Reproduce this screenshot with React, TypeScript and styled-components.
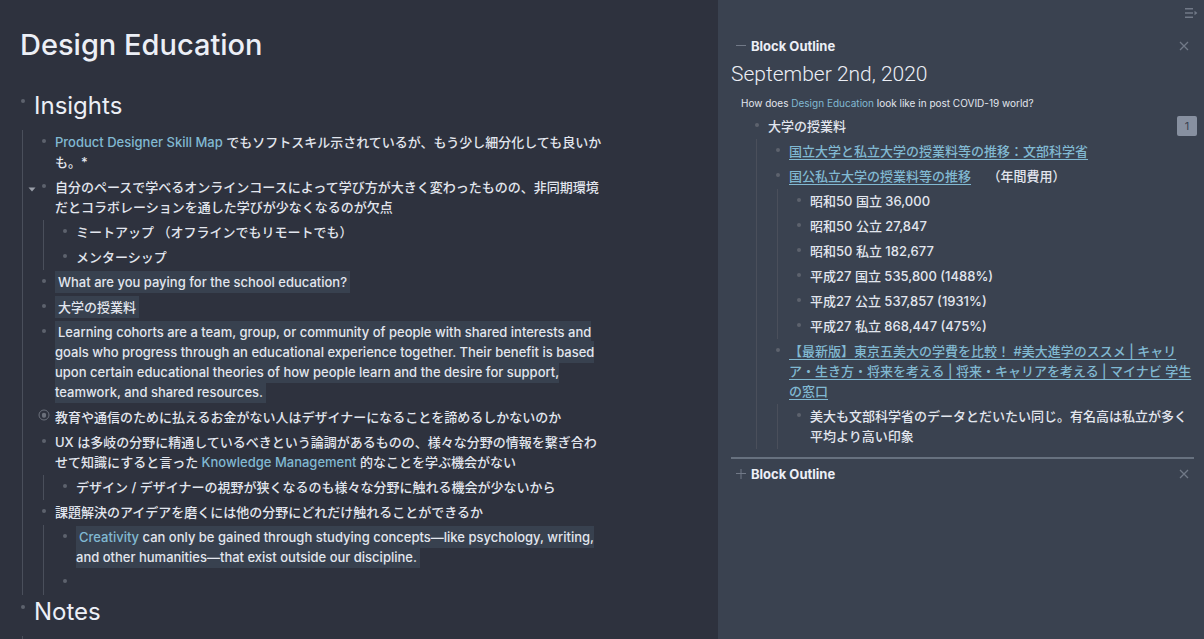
import React from "react";
import styled, { createGlobalStyle } from "styled-components";

const color = {
  page: "#2e323e",
  side: "#3a4250",
  text: "#e2e6ee",
  heading: "#eceff6",
  link: "#81b9d2",
  mark: "#38414f",
  line: "#4a4f5b",
  dot: "#5d626d",
  muted: "#717987",
};

const GlobalStyle = createGlobalStyle`
  * { box-sizing: border-box; }
  body {
    margin: 0;
    background: ${color.page};
    color: ${color.text};
    font-family: Inter, "Noto Sans CJK JP", sans-serif;
    font-size: 13px;
    line-height: 20px;
    font-weight: 500;
  }
`;

const Layout = styled.div`
  display: grid;
  grid-template-columns: minmax(0, 718fr) minmax(0, 486fr);
  height: 100vh;
`;

const Article = styled.main`
  padding: 27px 115px 0 21px;
  overflow-y: auto;
  scrollbar-width: none;
`;

const Sidebar = styled.aside`
  padding: 6px 10px 0 13px;
  background: ${color.side};
  overflow-y: auto;
  scrollbar-width: none;
`;

const PageTitle = styled.h1`
  margin: 0 0 26px -1px;
  color: ${color.heading};
  font-size: 29px;
  line-height: 36px;
  font-weight: 500;
`;

const SectionTitle = styled.h2`
  margin: 0;
  color: ${color.heading};
  font-size: 24px;
  line-height: 34px;
  font-weight: 400;
`;

const Blocks = styled.ul`
  list-style: none;
  margin: 0;
  padding: 0;
`;

const Children = styled(Blocks)<{ $gap?: number }>`
  margin: ${(p) => p.$gap ?? 0}px 0 0 1px;
  padding-left: 19px;
  border-left: 1px solid ${color.line};
`;

const Row = styled.div<{ $heading?: boolean }>`
  position: relative;
  display: flex;
  align-items: flex-start;
  min-height: 25px;
  padding: ${(p) => (p.$heading ? "0" : "2px 0 3px")};
`;

const Bullet = styled.span<{ $heading?: boolean }>`
  flex: 0 0 13px;
  height: 20px;
  padding-top: ${(p) => (p.$heading ? 10 : 7)}px;

  &::before {
    content: "";
    display: block;
    width: 4px;
    height: 4px;
    border-radius: 50%;
    background: ${color.dot};
  }
`;

const RingMark = styled.svg`
  position: absolute;
  left: -4px;
  top: 4px;
`;

const Caret = styled.button`
  position: absolute;
  left: -14px;
  top: 10px;
  width: 8px;
  height: 8px;
  padding: 0;
  border: 0;
  background: none;
  color: #9a9fa9;
  line-height: 0;
`;

const Text = styled.div`
  flex: 1;
  min-width: 0;
`;

const Mark = styled.span`
  padding: 3px;
  background: ${color.mark};
`;

const PageLink = styled.a`
  color: ${color.link};
  text-decoration: none;
`;

const WebLink = styled.a`
  color: ${color.link};
  text-decoration: underline;
  text-decoration-thickness: 1px;
  text-underline-offset: 3px;
`;

const Count = styled.button`
  flex: none;
  width: 20px;
  height: 20px;
  margin-right: -3px;
  padding: 0;
  border: 0;
  border-radius: 2px;
  background: #8790a0;
  color: #3a4250;
  font: 400 11px/20px Inter, sans-serif;
`;

const Toolbar = styled.div`
  display: flex;
  justify-content: flex-end;
  height: 14px;
  margin-right: -4px;
`;

const IconButton = styled.button`
  display: flex;
  align-items: center;
  justify-content: center;
  width: 20px;
  height: 20px;
  padding: 0;
  border: 0;
  background: none;
  color: ${color.muted};
`;

const ToolbarButton = styled(IconButton)`
  width: 14px;
  height: 14px;
`;

const PanelHead = styled.div`
  display: flex;
  align-items: center;
`;

const PanelTitle = styled.h3`
  flex: 1;
  margin: 0;
  color: ${color.heading};
  font-size: 13px;
  line-height: 20px;
  font-weight: 700;
`;

const Panel = styled.section`
  padding-top: 16px;

  & + & {
    margin-top: 8px;
    padding-top: 5px;
    border-top: 2px solid #67717f;
  }
`;

const DateTitle = styled.h2`
  margin: 4px 0 0;
  color: ${color.heading};
  font-family: Roboto, sans-serif;
  font-size: 21px;
  line-height: 28px;
  font-weight: 300;
`;

const Crumb = styled.p`
  margin: 7px 0 0 10px;
  font-size: 10px;
  line-height: 16px;
  font-weight: 400;
`;

const PanelBlocks = styled(Blocks)`
  margin: 3px 0 0 24px;
`;

type BlockProps = {
  text?: React.ReactNode;
  children?: React.ReactNode;
  caret?: boolean;
  ring?: boolean;
  count?: number;
};

function Block({ text, children, caret, ring, count }: BlockProps) {
  return (
    <li>
      <Row>
        {caret && (
          <Caret aria-label="Collapse block">
            <svg width="8" height="5" viewBox="0 0 8 5">
              <path d="M.5.5h7L4 4.5z" fill="currentColor" />
            </svg>
          </Caret>
        )}
        <Bullet />
        {ring && (
          <RingMark width="12" height="12" viewBox="0 0 12 12" fill="none">
            <circle cx="6" cy="6" r="5" stroke="#6b707b" />
            <circle cx="6" cy="6" r="2.2" fill="#6b707b" />
          </RingMark>
        )}
        <Text>{text}</Text>
        {count !== undefined && <Count aria-label={`${count} reference`}>{count}</Count>}
      </Row>
      {children && <Children>{children}</Children>}
    </li>
  );
}

function Section({ title, children }: { title: string; children: React.ReactNode }) {
  return (
    <li>
      <Row $heading>
        <Bullet $heading />
        <SectionTitle>{title}</SectionTitle>
      </Row>
      <Children $gap={7}>{children}</Children>
    </li>
  );
}

function PanelHeader({ open }: { open?: boolean }) {
  return (
    <PanelHead>
      <IconButton aria-label={open ? "Collapse panel" : "Expand panel"}>
        <svg width="10" height="10" viewBox="0 0 10 10" stroke="currentColor">
          <path d={open ? "M0 4.5h10" : "M0 4.5h10M5 0v10"} />
        </svg>
      </IconButton>
      <PanelTitle>Block Outline</PanelTitle>
      <IconButton aria-label="Close panel">
        <svg width="10" height="10" viewBox="0 0 10 10" stroke="currentColor" strokeWidth="1.3">
          <path d="M1 1l8 8M9 1l-8 8" />
        </svg>
      </IconButton>
    </PanelHead>
  );
}

const tuition = [
  "昭和50 国立 36,000",
  "昭和50 公立 27,847",
  "昭和50 私立 182,677",
  "平成27 国立 535,800 (1488%)",
  "平成27 公立 537,857 (1931%)",
  "平成27 私立 868,447 (475%)",
];

export default function App() {
  return (
    <Layout lang="ja">
      <GlobalStyle />
      <Article>
        <PageTitle>Design Education</PageTitle>
        <Blocks>
          <Section title="Insights">
            <Block
              text={
                <>
                  <PageLink href="#skill-map">Product Designer Skill Map</PageLink>{" "}
                  でもソフトスキル示されているが、もう少し細分化しても良いかも。*
                </>
              }
            />
            <Block
              caret
              text="自分のペースで学べるオンラインコースによって学び方が大きく変わったものの、非同期環境だとコラボレーションを通した学びが少なくなるのが欠点"
            >
              <Block text="ミートアップ （オフラインでもリモートでも）" />
              <Block text="メンターシップ" />
            </Block>
            <Block text={<Mark>What are you paying for the school education?</Mark>} />
            <Block text={<Mark>大学の授業料</Mark>} />
            <Block
              text={
                <Mark>
                  Learning cohorts are a team, group, or community of people with shared
                  interests and goals who progress through an educational experience
                  together. Their benefit is based upon certain educational theories of
                  how people learn and the desire for support, teamwork, and shared
                  resources.
                </Mark>
              }
            />
            <Block
              ring
              text="教育や通信のために払えるお金がない人はデザイナーになることを諦めるしかないのか"
            />
            <Block
              text={
                <>
                  UX は多岐の分野に精通しているべきという論調があるものの、様々な分野の情報を繋ぎ合わせて知識にすると言った{" "}
                  <PageLink href="#knowledge">Knowledge Management</PageLink>{" "}
                  的なことを学ぶ機会がない
                </>
              }
            >
              <Block text="デザイン / デザイナーの視野が狭くなるのも様々な分野に触れる機会が少ないから" />
            </Block>
            <Block text="課題解決のアイデアを磨くには他の分野にどれだけ触れることができるか">
              <Block
                text={
                  <Mark>
                    <PageLink href="#creativity">Creativity</PageLink> can only be gained
                    through studying concepts—like psychology, writing, and other
                    humanities—that exist outside our discipline.
                  </Mark>
                }
              />
              <Block />
            </Block>
          </Section>
          <Section title="Notes">
            <Block />
          </Section>
        </Blocks>
      </Article>

      <Sidebar>
        <Toolbar>
          <ToolbarButton aria-label="Hide sidebar">
            <svg width="14" height="12" viewBox="0 0 14 12" fill="none" stroke="currentColor" strokeWidth="1.6">
              <path d="M1 1.8h8M1 6h8M1 10.2h8" />
              <path d="M10.5 3.8v4.4L13.4 6z" fill="currentColor" stroke="none" />
            </svg>
          </ToolbarButton>
        </Toolbar>
        <Panel>
          <PanelHeader open />
          <DateTitle>September 2nd, 2020</DateTitle>
          <Crumb>
            How does <PageLink href="#design-education">Design Education</PageLink> look
            like in post COVID-19 world?
          </Crumb>
          <PanelBlocks>
            <Block text="大学の授業料" count={1}>
              <Block text={<WebLink href="#mext">国立大学と私立大学の授業料等の推移：文部科学省</WebLink>} />
              <Block
                text={
                  <>
                    <WebLink href="#trend">国公私立大学の授業料等の推移</WebLink>
                    {"\u3000 （年間費用）"}
                  </>
                }
              >
                {tuition.map((t) => (
                  <Block key={t} text={t} />
                ))}
              </Block>
              <Block
                text={
                  <WebLink href="#mynavi">
                    【最新版】東京五美大の学費を比較！ #美大進学のススメ | キャリア・生き方・将来を考える | 将来・キャリアを考える | マイナビ 学生の窓口
                  </WebLink>
                }
              >
                <Block text="美大も文部科学省のデータとだいたい同じ。有名高は私立が多く平均より高い印象" />
              </Block>
            </Block>
          </PanelBlocks>
        </Panel>
        <Panel>
          <PanelHeader />
        </Panel>
      </Sidebar>
    </Layout>
  );
}
